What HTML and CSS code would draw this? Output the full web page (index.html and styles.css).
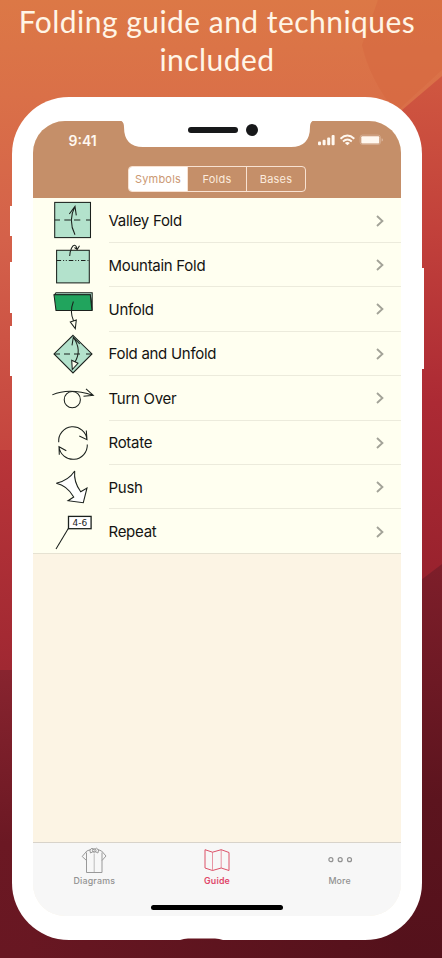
FILE: index.html
```html
<!DOCTYPE html>
<html lang="en">
<head>
<meta charset="utf-8">
<title>Folding guide</title>
<link rel="stylesheet" href="styles.css">
</head>
<body>
<svg class="backdrop" viewBox="0 0 442 958" preserveAspectRatio="none" aria-hidden="true">
  <defs>
    <linearGradient id="base" x1="0" y1="0" x2="0" y2="1">
      <stop offset="0" stop-color="#dc7846"/>
      <stop offset=".1" stop-color="#da7048"/>
      <stop offset=".25" stop-color="#d4614a"/>
      <stop offset=".47" stop-color="#c5453f"/>
      <stop offset=".7" stop-color="#8c2030"/>
      <stop offset=".85" stop-color="#701926"/>
      <stop offset="1" stop-color="#5e141f"/>
    </linearGradient>
    <linearGradient id="right" x1="0" y1="0" x2="0" y2="1">
      <stop offset="0" stop-color="#d05740"/>
      <stop offset=".28" stop-color="#c2413b"/>
      <stop offset=".6" stop-color="#ac2a34"/>
      <stop offset="1" stop-color="#94202c"/>
    </linearGradient>
    <linearGradient id="rlow" x1="0" y1="0" x2="0" y2="1">
      <stop offset="0" stop-color="#7e1e2a"/>
      <stop offset=".6" stop-color="#5c141e"/>
      <stop offset="1" stop-color="#54111b"/>
    </linearGradient>
    <linearGradient id="lmid" x1="0" y1="0" x2="0" y2="1">
      <stop offset="0" stop-color="#b93539"/>
      <stop offset="1" stop-color="#a02832"/>
    </linearGradient>
    <linearGradient id="llow" x1="0" y1="0" x2="0" y2="1">
      <stop offset="0" stop-color="#88242f"/>
      <stop offset=".6" stop-color="#6b1823"/>
      <stop offset="1" stop-color="#681722"/>
    </linearGradient>
    <linearGradient id="floor" x1="0" y1="0" x2="1" y2="0">
      <stop offset="0" stop-color="#681722"/>
      <stop offset="1" stop-color="#54111b"/>
    </linearGradient>
  </defs>
  <rect width="442" height="958" fill="url(#base)"/>
  <path d="M378 0H442V70L396 112Q370 80 362 45Z" fill="#d4653d" opacity=".45"/>
  <path d="M442 76L395 116V620H442Z" fill="url(#right)"/>
  <path d="M0 450H30V670H0Z" fill="url(#lmid)"/>
  <path d="M0 670H30V958H0Z" fill="url(#llow)"/>
  <path d="M400 596L442 564V958H400Z" fill="url(#rlow)"/>
  <path d="M30 900H400V958H30Z" fill="url(#floor)"/>
</svg>

<h1 class="headline">Folding guide and techniques<br>included</h1>

<div class="phone">
  <svg class="shell" viewBox="0 0 414 843" aria-hidden="true">
    <path d="M0 109h4v30H0zM0 165h4v51H0zM0 229h4v50H0zM410 171h4v101h-4z"/>
    <path class="port" d="M169 843.5q4-2 9-2h27q5 0 9 2z"/>
  </svg>
  <div class="screen">
    <svg class="notch" viewBox="0 0 187 26" aria-hidden="true">
      <path d="M-5-1Q0 0 0 6Q0 26 19 26H167Q186 26 186 6Q186 0 191-1Z" fill="#fff"/>
      <rect x="64" y="6" width="50" height="6" rx="3" fill="#17181a"/>
      <circle cx="128" cy="9" r="6" fill="#17181a"/>
    </svg>
    <header class="header">
      <div class="status">
        <span class="time">9:41</span>
        <svg class="indicators" viewBox="0 0 66 12" width="66" height="12" fill="#fff8f0">
          <rect x="0" y="7.6" width="3" height="3.6" rx="1"/>
          <rect x="4.6" y="5.8" width="3" height="5.4" rx="1"/>
          <rect x="9.2" y="3.4" width="3" height="7.8" rx="1"/>
          <rect x="13.6" y="1" width="3" height="10.2" rx="1"/>
          <g fill="none" stroke="#fff8f0" stroke-width="1.9">
            <path d="M22.5 4.7Q29.4-1.6 36.3 4.7"/>
            <path d="M25 7.5Q29.4 3.6 33.8 7.5"/>
          </g>
          <path d="M29.4 11.3L26.9 8.9Q29.4 7 31.9 8.9Z"/>
          <rect x="42.1" y="1.1" width="20.4" height="9.4" rx="2.4" fill="none" stroke="#fff" stroke-opacity=".3" stroke-width=".8"/>
          <rect x="43.3" y="2.2" width="18" height="7.2" rx="1"/>
          <path d="M63.6 4.2q1.4.4 1.4 1.7t-1.4 1.7z" opacity=".4"/>
        </svg>
      </div>
      <nav class="segments">
        <span class="segment selected">Symbols</span>
        <span class="segment">Folds</span>
        <span class="segment">Bases</span>
      </nav>
    </header>

    <ul class="list">
      <li class="row">
        <svg class="symbol" viewBox="0 0 75.5 44.45">
          <rect class="paper" x="21.7" y="4.4" width="35.8" height="35.2"/>
          <path d="M21.7 22H27M31.3 22H37.7M41 22H47.3M53 22H57.5M42 36.7Q34.6 22 42 8.4M36.3 16L42 8.4L43.3 17.4"/>
        </svg>
        <div class="cell"><span>Valley Fold</span><svg class="chevron" viewBox="0 0 8 12"><path d="M1 1L6.4 6L1 11"/></svg></div>
      </li>
      <li class="row">
        <svg class="symbol" viewBox="0 0 75.5 44.45">
          <rect class="paper" x="23.6" y="7.3" width="32.7" height="32.6"/>
          <path d="M23.6 17.6H56.3" stroke-dasharray="4.5 2 1 1.7 1 2"/>
          <path d="M36.7 13C37 7 39.5 2 41.5 2.2Q43.5 2.5 44 6.3M41.5 4.5L44.2 6.5L46.5 2.8"/>
        </svg>
        <div class="cell"><span>Mountain Fold</span><svg class="chevron" viewBox="0 0 8 12"><path d="M1 1L6.4 6L1 11"/></svg></div>
      </li>
      <li class="row">
        <svg class="symbol" viewBox="0 0 75.5 44.45">
          <path d="M21.5 7.8L23 5.8H59.2V23.5L57.3 7.8Z" fill="#b3e2cc"/>
          <path d="M21 7.8H57.3L59 23.6H23Z" fill="#21a45d"/>
          <path d="M40.4 14.5Q36.4 25 40.6 34"/>
          <path d="M37.3 35L43.3 33L42.3 41.6Z" fill="#fffff0"/>
        </svg>
        <div class="cell"><span>Unfold</span><svg class="chevron" viewBox="0 0 8 12"><path d="M1 1L6.4 6L1 11"/></svg></div>
      </li>
      <li class="row">
        <svg class="symbol" viewBox="0 0 75.5 44.45">
          <path class="paper" d="M40 3.3L59 22L40 40.9L21 22Z"/>
          <path d="M21 22H27M31 22H37M41 22H47M53 22H59M40.3 5.3Q49.2 18 42 30M39 13.3L40.3 5.3L46.7 12"/>
          <path d="M38.7 28.3L45 31.3L39.3 37.6Z" fill="#fffff0"/>
        </svg>
        <div class="cell"><span>Fold and Unfold</span><svg class="chevron" viewBox="0 0 8 12"><path d="M1 1L6.4 6L1 11"/></svg></div>
      </li>
      <li class="row">
        <svg class="symbol" viewBox="0 0 75.5 44.45">
          <path d="M19.3 18.9Q36 11.5 60.3 19.4M53 12.9L60.3 19.4L50.5 20.3"/>
          <circle cx="39.3" cy="23.7" r="8.1"/>
        </svg>
        <div class="cell"><span>Turn Over</span><svg class="chevron" viewBox="0 0 8 12"><path d="M1 1L6.4 6L1 11"/></svg></div>
      </li>
      <li class="row">
        <svg class="symbol" viewBox="0 0 75.5 44.45">
          <path d="M25.7 21.2A14.2 14.2 0 0 1 54 18.7M46.3 15L54 18.7L53.3 9.5"/>
          <path d="M54.3 23.5A14.2 14.2 0 0 1 26 25.7M26.3 33.8L26 25.7L33.3 29.8"/>
        </svg>
        <div class="cell"><span>Rotate</span><svg class="chevron" viewBox="0 0 8 12"><path d="M1 1L6.4 6L1 11"/></svg></div>
      </li>
      <li class="row">
        <svg class="symbol" viewBox="0 0 75.5 44.45">
          <path d="M41.7 6Q40.5 17 47.7 26.7L54 23L50.3 37.7L35 35.7L40.7 32Q34 20.5 23.3 18.3Q35.5 15.5 41.7 6Z" fill="#fff"/>
        </svg>
        <div class="cell"><span>Push</span><svg class="chevron" viewBox="0 0 8 12"><path d="M1 1L6.4 6L1 11"/></svg></div>
      </li>
      <li class="row last">
        <svg class="symbol" viewBox="0 0 75.5 44.45">
          <path d="M35.3 19.5L23 40"/>
          <rect x="35.5" y="7.4" width="22.6" height="12.3" stroke-width="1.3" fill="#fff"/>
          <text x="46.8" y="16.8">4-6</text>
        </svg>
        <div class="cell"><span>Repeat</span><svg class="chevron" viewBox="0 0 8 12"><path d="M1 1L6.4 6L1 11"/></svg></div>
      </li>
    </ul>

    <footer class="tabs">
      <div class="tab">
        <svg width="28" height="28" viewBox="0 0 28 28" fill="none" stroke="#999" stroke-width="1">
          <path d="M6.5 6.5V26.5H22V6.5M6.5 14.5L2.2 10.5L6.8 5L11 3.4M22 14.5L26 10L21.6 5L17.5 3.4"/>
          <path d="M14.2 7.5V26.5" stroke-opacity=".65"/>
          <path d="M14.2 5L10.5 7L9.8 4L12 2.2L14.2 4L16.4 2.2L18.6 4L17.9 7Z"/>
          <circle cx="14.2" cy="4.5" r="1.8"/>
        </svg>
        <span>Diagrams</span>
      </div>
      <div class="tab active">
        <svg width="28" height="28" viewBox="0 0 28 28" fill="none" stroke="#dc5269" stroke-width="1">
          <path d="M2 3.7L9.5 6.2L18.2 3.7L26 6.5V24.5L18.2 22L9.5 24.5L2 22Z"/>
          <path d="M9.5 6.2V24.5M18.2 3.7V22" stroke-opacity=".6"/>
        </svg>
        <span>Guide</span>
      </div>
      <div class="tab">
        <svg width="28" height="28" viewBox="0 0 28 28" fill="none" stroke="#929292" stroke-width="1.2">
          <circle cx="4.9" cy="13.7" r="2"/><circle cx="14.2" cy="13.7" r="2"/><circle cx="23.5" cy="13.7" r="2"/>
        </svg>
        <span>More</span>
      </div>
      <div class="home"></div>
    </footer>
  </div>
</div>
</body>
</html>
```
FILE: styles.css
```css
* { box-sizing: border-box; }
body {
  margin: 0;
  width: 442px;
  height: 958px;
  overflow: hidden;
  position: relative;
  background: #8c2030;
  font-family: Inter, "Liberation Sans", sans-serif;
}
.backdrop {
  position: absolute;
  inset: 0;
  width: 442px;
  height: 958px;
  z-index: -1;
}
.headline {
  margin: 0;
  height: 97px;
  padding: 2px 8px 0 0;
  color: #fff5e6;
  font: 400 30px/38px Lato, sans-serif;
  letter-spacing: .46px;
  text-align: center;
  white-space: nowrap;
}
.phone {
  position: relative;
  width: 410px;
  height: 843px;
  margin-left: 12px;
  padding: 24px 21px;
  border-radius: 57px;
  background: #fff;
}
.shell {
  position: absolute;
  left: -2px;
  top: 0;
  width: 414px;
  height: 843px;
  fill: #fff;
}
.shell .port { fill: #64141f; }
.screen {
  position: relative;
  display: flex;
  flex-direction: column;
  width: 368px;
  height: 795px;
  overflow: hidden;
  border-radius: 32px;
  background: #fcf4e4;
}
.notch {
  position: absolute;
  left: 91px;
  top: 0;
  width: 187px;
  height: 26px;
  overflow: visible;
}
.header {
  height: 77.4px;
  flex: none;
  background: #c58f69;
}
.status {
  display: flex;
  justify-content: space-between;
  align-items: center;
  height: 38px;
  padding: 0 17px 0 35.5px;
}
.time {
  color: #fff8f0;
  font-size: 14px;
  font-weight: 600;
}
.segments {
  display: flex;
  width: 178px;
  height: 26px;
  margin: 7px 0 0 95px;
  border: 1px solid #f8e2d2;
  border-radius: 4px;
  overflow: hidden;
}
.segment {
  flex: 1;
  display: flex;
  align-items: center;
  justify-content: center;
  color: #fcebdd;
  font-size: 11px;
  letter-spacing: .2px;
}
.segment + .segment { border-left: 1px solid #f8e2d2; }
.segment.selected { background: #fff; color: #cb9873; }
.list {
  margin: 0;
  padding: 0;
  list-style: none;
  background: #fffff0;
}
.row {
  display: flex;
  height: 44.45px;
}
.symbol {
  flex: none;
  width: 75.5px;
  height: 44.45px;
  overflow: visible;
  fill: none;
  stroke: #1b211d;
  stroke-width: 1.05;
}
.symbol .paper { fill: #b3e2cc; }
.symbol text {
  fill: #222;
  stroke: none;
  font: 500 9px "DejaVu Sans", sans-serif;
  text-anchor: middle;
}
.cell {
  flex: 1;
  display: flex;
  align-items: center;
  justify-content: space-between;
  padding: 1px 17px 0 0;
  border-bottom: 1px solid #ecebdc;
  color: #141412;
  font-size: 15px;
  letter-spacing: -.28px;
}
.last { border-bottom: 1px solid #e6e2d2; }
.last .cell { border: 0; }
.chevron {
  width: 8px;
  height: 12px;
  fill: none;
  stroke: #a3a398;
  stroke-width: 1.9;
}
.tabs {
  display: grid;
  grid-template-columns: repeat(3, 1fr);
  grid-template-rows: 1fr auto;
  height: 74px;
  margin-top: auto;
  border-top: 1px solid #d8d3ca;
  background: #f7f7f7;
}
.tab {
  display: flex;
  flex-direction: column;
  align-items: center;
  padding-top: 3px;
  color: #929292;
  font-size: 8.8px;
  font-weight: 500;
  line-height: 12px;
  letter-spacing: .2px;
}
.tab span { margin-top: 1px; }
.active { color: #e0486a; font-weight: 600; }
.home {
  grid-column: 1 / -1;
  justify-self: center;
  width: 132px;
  height: 5px;
  margin-bottom: 6px;
  border-radius: 3px;
  background: #000;
}
```
